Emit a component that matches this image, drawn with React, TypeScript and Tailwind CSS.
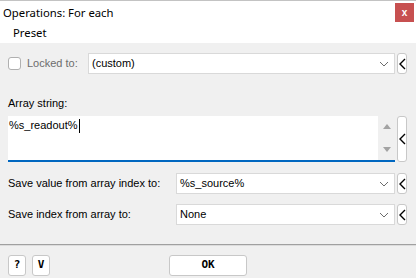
import React from "react";

const Chevron = () => (
  <svg width="10" height="6" viewBox="0 0 10 6" className="shrink-0">
    <path d="M1 1 L5 5 L9 1" fill="none" stroke="#6b6b6b" strokeWidth="1" />
  </svg>
);

const LtBtn = ({ h }: { h: string }) => (
  <div className={`ml-[2px] w-[10px] ${h} border border-[#c8c8c8] rounded-[3px] bg-white flex items-center justify-center`}>
    <svg width="7" height="12" viewBox="0 0 7 12">
      <path d="M6 1 L1 6 L6 11" fill="none" stroke="#000" strokeWidth="1.4" />
    </svg>
  </div>
);

const Select = ({ value, w }: { value: string; w: string }) => (
  <div className="flex items-center">
    <div className={`${w} h-[21px] bg-white border border-[#d9d9d9] flex items-center pl-[3px] pr-[5px] justify-between`}>
      <span className="text-[11px] text-black leading-none">{value}</span>
      <Chevron />
    </div>
    <LtBtn h="h-[21px]" />
  </div>
);

export default function App() {
  return (
    <div className="w-[416px] h-[278px] bg-[#f0f0f0] overflow-hidden flex flex-col" style={{ fontFamily: "'Liberation Sans', Arial, sans-serif" }}>
      <div className="bg-white border-t border-[#c3c3c3]">
        <div className="h-[21px] flex items-start justify-between">
          <span className="pl-[3px] pt-[5px] text-[11.3px] leading-[14px] text-black" style={{ fontFamily: "'Noto Sans', sans-serif" }}>Operations: For each</span>
          <div className="mt-[2px] mr-[2px] w-[19px] h-[19px] bg-[#c75050] flex items-center justify-center text-white text-[10px] font-bold leading-none">x</div>
        </div>
        <div className="h-[21px] pl-[13px] pt-[3px] text-[11.3px] leading-[16px] text-black" style={{ fontFamily: "'Noto Sans', sans-serif" }}>Preset</div>
      </div>
      <div className="flex-1 px-[8px] pt-[10px]">
        <div className="flex items-center">
          <div className="w-[13px] h-[13px] border border-[#b0b0b0] rounded-[3px] bg-white" />
          <span className="ml-[6px] w-[61px] text-[11px] text-[#6d6d6d]">Locked to:</span>
          <Select value="(custom)" w="w-[307px]" />
        </div>
        <div className="mt-[22px] text-[11px] leading-[14px] text-black">Array string:</div>
        <div className="mt-[6px] flex items-stretch">
          <div className="w-[387px] h-[46px] bg-white border-b-2 border-[#0067c0] flex">
            <div className="flex-1 pl-[1px] pt-[3px] text-[11px] leading-[13px] text-black flex items-start">
              <span>%s_readout%</span>
              <span className="w-px h-[14px] bg-black ml-[1px]" />
            </div>
            <div className="w-[17px] bg-[#f0f0f0] flex flex-col items-center justify-between py-[8px]">
              <svg width="8" height="5" viewBox="0 0 8 5"><path d="M0 5 L4 0 L8 5 Z" fill="#a3a3a3" /></svg>
              <svg width="8" height="5" viewBox="0 0 8 5"><path d="M0 0 L4 5 L8 0 Z" fill="#a3a3a3" /></svg>
            </div>
          </div>
          <LtBtn h="h-[46px]" />
        </div>
        <div className="mt-[11px] flex items-center">
          <span className="w-[168px] text-[11px] text-black">Save value from array index to:</span>
          <Select value="%s_source%" w="w-[219px]" />
        </div>
        <div className="mt-[10px] flex items-center">
          <span className="w-[168px] text-[11px] text-black">Save index from array to:</span>
          <Select value="None" w="w-[219px]" />
        </div>
      </div>
      <div className="h-px bg-[#a0a0a0]" />
      <div className="h-px bg-[#dcdcdc]" />
      <div className="h-[32px] flex items-start pt-[9px] pl-[8px]">
        <div className="w-[18px] h-[21px] border border-[#c8c8c8] rounded-[3px] bg-white flex items-center justify-center text-[11px] font-bold" style={{ fontFamily: "'DejaVu Sans Mono', monospace" }}>?</div>
        <div className="ml-[6px] w-[18px] h-[21px] border border-[#c8c8c8] rounded-[3px] bg-white flex items-center justify-center text-[11px] font-bold" style={{ fontFamily: "'DejaVu Sans Mono', monospace" }}>V</div>
        <div className="ml-[119px] w-[78px] h-[21px] border border-[#c8c8c8] rounded-[3px] bg-white flex items-center justify-center text-[11px] font-bold" style={{ fontFamily: "'DejaVu Sans Mono', monospace" }}>OK</div>
      </div>
    </div>
  );
}
